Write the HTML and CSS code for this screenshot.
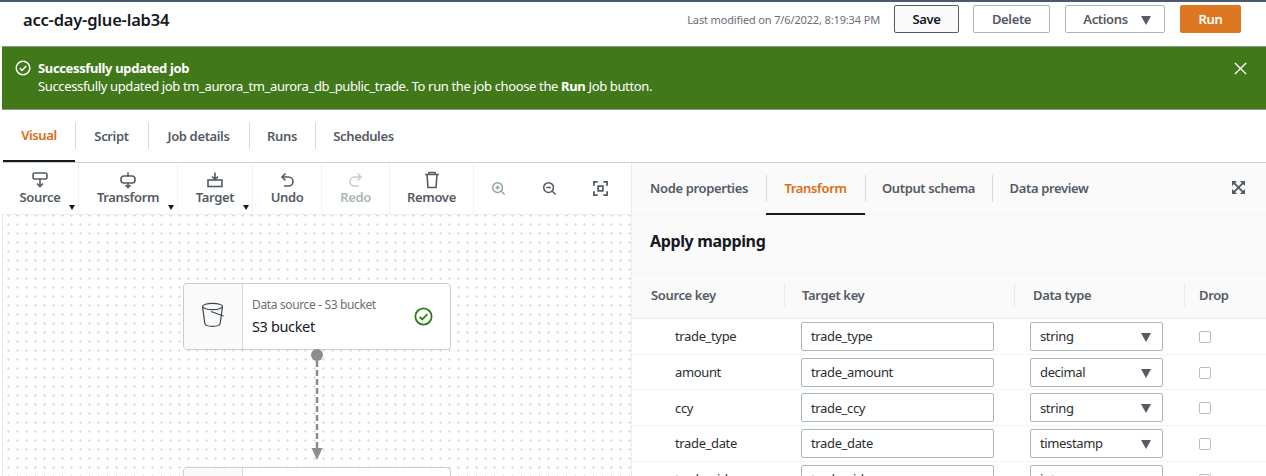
FILE: index.html
```html
<!DOCTYPE html>
<html>
<head>
  <meta charset="utf-8">
  <title>acc-day-glue-lab34</title>
  <link rel="stylesheet" href="styles.css">
</head>
<body>
  <div class="page">
    <div class="header">
      <h1 class="job-name">acc-day-glue-lab34</h1>
      <span class="modified">Last modified on 7/6/2022, 8:19:34 PM</span>
      <button class="btn btn-save">Save</button>
      <button class="btn btn-delete">Delete</button>
      <button class="btn btn-actions">Actions <i class="caret"></i></button>
      <button class="btn btn-run">Run</button>
    </div>

    <div class="banner">
      <svg class="banner-icon" viewBox="0 0 16 16"><circle cx="8" cy="8" r="6.8"/><path d="M4.8 8.2l2.2 2.2 4.2-4.4"/></svg>
      <div class="banner-text">
        <div class="banner-title">Successfully updated job</div>
        <div>Successfully updated job tm_aurora_tm_aurora_db_public_trade. To run the job choose the <b>Run</b> Job button.</div>
      </div>
      <svg class="banner-close" viewBox="0 0 14 14"><path d="M1 1l12 12M13 1L1 13"/></svg>
    </div>

    <div class="tabs">
      <a class="tab tab-visual active">Visual</a>
      <a class="tab tab-script">Script</a>
      <a class="tab tab-details">Job details</a>
      <a class="tab tab-runs">Runs</a>
      <a class="tab tab-schedules">Schedules</a>
    </div>

    <div class="workspace">
      <div class="left">
        <div class="toolbar">
          <div class="tool tool-source">
            <svg viewBox="0 0 18 18"><rect x="2" y="2" width="14" height="6" rx="1.5"/><path d="M9 8v7M6 12.5l3 3 3-3"/></svg>
            <span>Source</span><i class="mini-caret"></i>
          </div>
          <div class="tool tool-transform">
            <svg viewBox="0 0 18 18"><rect x="2" y="5" width="14" height="7" rx="3"/><path d="M9 1.500v3.500M9 12v4.500M6.500 14l2.500 2.500 2.500-2.500"/></svg>
            <span>Transform</span><i class="mini-caret"></i>
          </div>
          <div class="tool tool-target">
            <svg viewBox="0 0 18 18"><rect x="2" y="9" width="14" height="6.5"/><path d="M9 1.5v7M6 5.5l3 3 3-3"/></svg>
            <span>Target</span><i class="mini-caret"></i>
          </div>
          <div class="tool tool-undo">
            <svg viewBox="0 0 18 18"><path d="M4.5 6h6a4 4 0 0 1 0 9H6M7.5 2.5L4 6l3.5 3.5"/></svg>
            <span>Undo</span>
          </div>
          <div class="tool tool-redo disabled">
            <svg viewBox="0 0 18 18"><path d="M13.5 6h-6a4 4 0 0 0 0 9H12M10.5 2.5L14 6l-3.5 3.5"/></svg>
            <span>Redo</span>
          </div>
          <div class="tool tool-remove">
            <svg viewBox="0 0 18 18"><path d="M2 3.5h14M6 3.5V1.5h6v2M4 3.5l1 13h8l1-13"/></svg>
            <span>Remove</span>
          </div>
          <div class="zooms">
            <svg class="zoom-in" viewBox="0 0 16 16"><circle cx="7" cy="7" r="5.2"/><path d="M11 11l3.5 3.5M4.8 7h4.4M7 4.8v4.4"/></svg>
            <svg class="zoom-out" viewBox="0 0 16 16"><circle cx="7" cy="7" r="5.2"/><path d="M11 11l3.5 3.5M4.5 7h5"/></svg>
            <svg class="zoom-fit" viewBox="0 0 16 16"><path d="M1 5V1h4M11 1h4v4M15 11v4h-4M5 15H1v-4"/><rect x="5.5" y="5.5" width="5" height="5"/></svg>
          </div>
        </div>

        <div class="canvas">
          <div class="node node-s3">
            <div class="node-icon">
              <svg viewBox="0 0 24 26"><ellipse cx="11.500" cy="4.500" rx="10" ry="3.200"/><path d="M1.500 4.500l2.300 17c.3 1.800 3.600 2.800 7.700 2.800s7.400-1 7.700-2.800l2.300-17M10 9.500l12.500 4.500"/></svg>
            </div>
            <div class="node-body">
              <div class="node-kind">Data source - S3 bucket</div>
              <div class="node-name">S3 bucket</div>
            </div>
            <svg class="node-ok" viewBox="0 0 18 18"><circle cx="9" cy="9" r="7.700"/><path d="M5.300 9.300l2.500 2.500 4.900-5"/></svg>
          </div>
          <svg class="edge" viewBox="0 0 14 112">
            <circle cx="7" cy="6" r="6"/>
            <path class="edge-line" d="M7 12v88"/>
            <path class="edge-head" d="M1.500 99h11L7 111z"/>
          </svg>
          <div class="node node-next"><div class="node-icon"></div></div>
        </div>
      </div>

      <div class="right">
        <div class="panel-tabs">
          <a class="ptab ptab-node">Node properties</a>
          <a class="ptab ptab-transform active">Transform</a>
          <a class="ptab ptab-schema">Output schema</a>
          <a class="ptab ptab-preview">Data preview</a>
          <svg class="expand" viewBox="0 0 14 14">
            <path class="expand-tips" d="M0 0h5.500L0 5.500zM14 0v5.500L8.500 0zM14 14H8.500L14 8.500zM0 14V8.500L5.500 14z"/>
            <path d="M2 2l10 10M12 2L2 12"/>
          </svg>
        </div>
        <h2 class="panel-title">Apply mapping</h2>

        <div class="mapping-head">
          <div>Source key</div>
          <div>Target key</div>
          <div>Data type</div>
          <div>Drop</div>
        </div>

        <div class="mapping-row">
          <div class="source">trade_type</div>
          <div><div class="field">trade_type</div></div>
          <div class="field select">string<i class="caret"></i></div>
          <div><i class="check"></i></div>
        </div>
        <div class="mapping-row">
          <div class="source">amount</div>
          <div><div class="field">trade_amount</div></div>
          <div class="field select">decimal<i class="caret"></i></div>
          <div><i class="check"></i></div>
        </div>
        <div class="mapping-row">
          <div class="source">ccy</div>
          <div><div class="field">trade_ccy</div></div>
          <div class="field select">string<i class="caret"></i></div>
          <div><i class="check"></i></div>
        </div>
        <div class="mapping-row">
          <div class="source">trade_date</div>
          <div><div class="field">trade_date</div></div>
          <div class="field select">timestamp<i class="caret"></i></div>
          <div><i class="check"></i></div>
        </div>
        <div class="mapping-row">
          <div class="source">trade_side</div>
          <div><div class="field">trade_side</div></div>
          <div class="field select">int<i class="caret"></i></div>
          <div><i class="check"></i></div>
        </div>
      </div>
    </div>
  </div>
</body>
</html>
```

FILE: styles.css
```css
* {
  box-sizing: border-box;
}

html, body {
  margin: 0;
  height: 476px;
  overflow: hidden;
  background: #fff;
}

.page {
  height: 476px;
  overflow: hidden;
  padding-left: 2px;
  border-top: 2px solid #4c5a6e;
  font-family: "Noto Sans", "Open Sans", sans-serif;
  font-size: 13px;
  letter-spacing: -0.36px;
  color: #16191f;
}

/* header */
.header {
  height: 44px;
  display: flex;
  align-items: center;
  padding: 0 25px 10px 21px;
}

.job-name {
  margin: 0 auto 0 0;
  font-size: 16.5px;
  font-weight: 600;
  letter-spacing: -0.2px;
}

.modified {
  font-size: 11px;
  letter-spacing: -0.14px;
  color: #687078;
  margin-right: 14px;
}

.btn {
  height: 28px;
  font-family: inherit;
  font-size: 13px;
  font-weight: 600;
  letter-spacing: inherit;
  color: #545b64;
  background: #fff;
  border: 1px solid #aab7b8;
  border-radius: 2px;
  padding: 0;
  margin-left: 15px;
}

.btn-save {
  width: 65px;
  margin-left: 0;
  color: #16191f;
  background: #fafafa;
  border-color: #545b64;
}

.btn-delete {
  width: 77px;
  margin-left: 14px;
}

.btn-actions {
  width: 100px;
  padding-left: 4px;
}

.btn-run {
  width: 61px;
  color: #fff;
  background: #dd7722;
  border-color: #dd7722;
}

.caret {
  display: inline-block;
  width: 0;
  height: 0;
  border-left: 5px solid transparent;
  border-right: 5px solid transparent;
  border-top: 9px solid #545b64;
}

.btn-actions .caret {
  margin-left: 10px;
  vertical-align: -1px;
}

/* banner */
.banner {
  height: 64px;
  display: flex;
  align-items: center;
  background: #41791a;
  color: #fff;
  padding: 0 0 2px 13px;
  border-top: 1px solid #8a9a8a;
  border-bottom: 1px solid #8a9a8a;
  line-height: 18px;
}

.banner-icon {
  width: 16px;
  height: 16px;
  align-self: flex-start;
  margin-top: 13px;
  fill: none;
  stroke: #fff;
  stroke-width: 1.5;
}

.banner-text {
  margin-left: 7px;
  flex: 1;
}

.banner-title {
  font-weight: 700;
}

.banner-close {
  width: 13px;
  height: 13px;
  align-self: flex-start;
  margin: 15px 19px 0 0;
  fill: none;
  stroke: #fff;
  stroke-width: 1.4;
}

/* main tabs */
.tabs {
  height: 53px;
  display: flex;
  align-items: center;
  padding-left: 1px;
  border-bottom: 1px solid #c5cfcf;
}

.tab {
  height: 52px;
  display: flex;
  align-items: center;
  justify-content: center;
  font-weight: 600;
  color: #545b64;
  position: relative;
}

.tab + .tab::before {
  content: "";
  position: absolute;
  left: 0;
  top: 12px;
  height: 27px;
  width: 1px;
  background: #d5dbdb;
}

.tab.active {
  color: #dd6b10;
  border-bottom: 2px solid #16191f;
}

.tab-visual {
  width: 72px;
}

.tab-script {
  width: 73px;
}

.tab-details {
  width: 101px;
}

.tab-runs {
  width: 66px;
}

.tab-schedules {
  width: 97px;
}

/* workspace */
.workspace {
  display: flex;
  height: 313px;
}

.left {
  width: 630px;
  border-right: 1px solid #eaeded;
}

.toolbar {
  height: 52px;
  display: flex;
  background: #fff;
  border-bottom: 1px solid #eaeded;
}

.tool {
  height: 51px;
  display: flex;
  flex-direction: column;
  align-items: center;
  padding-top: 8px;
  position: relative;
  font-weight: 600;
  color: #545b64;
  line-height: 18px;
  border-right: 1px solid #f2f3f3;
}

.tool svg {
  width: 18px;
  height: 18px;
  margin-bottom: -1px;
  fill: none;
  stroke: #545b64;
  stroke-width: 1.6;
}

.tool.disabled {
  color: #aab7b8;
}

.tool.disabled svg {
  stroke: #c5cfcf;
}

.mini-caret {
  position: absolute;
  right: 3px;
  bottom: 4px;
  border-left: 3px solid transparent;
  border-right: 3px solid transparent;
  border-top: 5px solid #16191f;
}

.tool-source {
  width: 77px;
}

.tool-transform {
  width: 99px;
}

.tool-target {
  width: 75px;
}

.tool-undo {
  width: 69px;
}

.tool-redo {
  width: 68px;
}

.tool-remove {
  width: 84px;
}

.zooms {
  display: flex;
  align-items: center;
  gap: 36px;
  padding: 0 0 1px 17px;
}

.zooms svg {
  width: 15px;
  height: 15px;
  fill: none;
  stroke: #545b64;
  stroke-width: 1.600;
}

.zooms .zoom-in {
  stroke: #95a5a6;
}

.zooms .zoom-fit {
  stroke-width: 1.900;
}

.canvas {
  position: relative;
  height: 261px;
  background-color: #fff;
  background-image: radial-gradient(circle, #dcdfe0 1px, transparent 1.300px);
  background-size: 9px 9px;
  background-position: 2px 5px;
  box-shadow: inset 1px 0 0 #e4e8e8;
  overflow: hidden;
}

.node {
  position: absolute;
  left: 181px;
  width: 268px;
  display: flex;
  align-items: center;
  background: #fff;
  border: 1px solid #c5cfcf;
  border-radius: 4px;
}

.node-s3 {
  top: 68px;
  height: 67px;
}

.node-next {
  top: 252px;
  height: 67px;
}

.node-icon {
  width: 59px;
  height: 100%;
  display: flex;
  align-items: center;
  justify-content: center;
  background: #fafafa;
  border-right: 1px solid #d5dbdb;
  border-radius: 4px 0 0 4px;
}

.node-icon svg {
  width: 24px;
  height: 26px;
  margin-bottom: 3px;
  fill: none;
  stroke: #3a4350;
  stroke-width: 1.200;
}

.node-body {
  margin-left: 9px;
  flex: 1;
}

.node-kind {
  font-size: 12px;
  color: #687078;
  line-height: 18px;
}

.node-name {
  font-size: 14.5px;
  line-height: 24px;
  color: #16191f;
}

.node-ok {
  width: 19px;
  height: 19px;
  margin-right: 17px;
  fill: none;
  stroke: #2e7d1a;
  stroke-width: 1.700;
}

.edge {
  position: absolute;
  left: 308px;
  top: 134px;
  width: 14px;
  height: 112px;
  fill: #8d8d8d;
}

.edge-line {
  stroke: #8d8d8d;
  stroke-width: 2.500;
  stroke-dasharray: 6 3;
  fill: none;
}

/* right panel */
.right {
  flex: 1;
  background: #fafafa;
}

.panel-tabs {
  height: 52px;
  display: flex;
  position: relative;
  border-bottom: 1px solid #f2f3f3;
}

.ptab {
  height: 52px;
  display: flex;
  align-items: center;
  justify-content: center;
  font-weight: 600;
  color: #545b64;
  position: relative;
  padding-bottom: 2px;
}

.ptab + .ptab::before {
  content: "";
  position: absolute;
  left: 0;
  top: 12px;
  height: 27px;
  width: 1px;
  background: #d5dbdb;
}

.ptab.active {
  color: #dd6b10;
  border-bottom: 2px solid #16191f;
  padding-bottom: 0;
}

.ptab-node {
  width: 134px;
}

.ptab-transform {
  width: 99px;
}

.ptab-schema {
  width: 127px;
}

.ptab-preview {
  width: 114px;
}

.expand {
  position: absolute;
  right: 21px;
  top: 18px;
  width: 13px;
  height: 13px;
  fill: none;
  stroke: #545b64;
  stroke-width: 2;
}

.expand-tips {
  fill: #545b64;
  stroke: none;
}

.panel-title {
  margin: 0;
  height: 59px;
  padding: 15px 0 0 18px;
  font-size: 16px;
  font-weight: 700;
  color: #16191f;
  border-bottom: 1px solid #f2f3f3;
}

.mapping-head,
.mapping-row {
  display: grid;
  grid-template-columns: 152px 230px 170px 1fr;
  align-items: center;
}

.mapping-head {
  height: 45px;
  padding-bottom: 2px;
  font-weight: 600;
  color: #545b64;
  border-bottom: 1px solid #eaeded;
}

.mapping-head > div {
  padding-left: 18px;
  border-left: 1px solid #eaeded;
  line-height: 24px;
}

.mapping-head > div:first-child {
  padding-left: 19px;
  border-left: 0;
}

.mapping-head > div:nth-child(2) {
  padding-left: 17px;
}

.mapping-head > div:last-child {
  padding-left: 14px;
}

.mapping-row {
  height: 35.700px;
  background: #fff;
  border-bottom: 1px solid #f2f3f3;
}

.source {
  padding-left: 43px;
  color: #2a2e33;
}

.field {
  width: 193px;
  height: 29px;
  margin-left: 17px;
  display: flex;
  align-items: center;
  padding-left: 9px;
  color: #2a2e33;
  background: #fff;
  border: 1px solid #aab7b8;
  border-radius: 2px;
}

.select {
  width: 133px;
  position: relative;
  margin-left: 16px;
}

.select .caret {
  position: absolute;
  right: 11px;
  top: 10px;
}

.check {
  display: block;
  width: 12px;
  height: 12px;
  margin: 1px 0 0 15px;
  background: #fff;
  border: 1px solid #b5c0c1;
  border-radius: 2px;
}
```
